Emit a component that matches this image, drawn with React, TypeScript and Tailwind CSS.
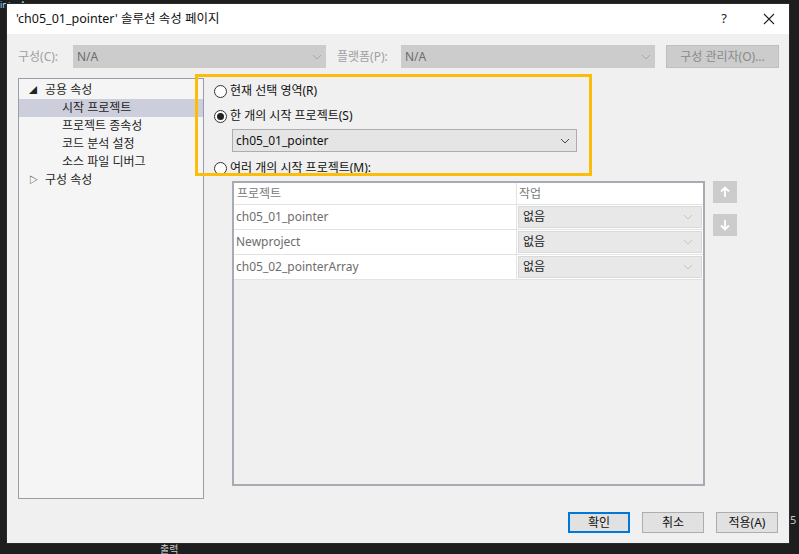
import React from 'react';

const font = { fontFamily: '"Noto Sans", "Noto Sans CJK KR", sans-serif' };

const Chevron = ({ color = '#7a7a7a' }: { color?: string }) => (
  <svg width="10" height="6" viewBox="0 0 10 6">
    <path d="M1 1 L5 5 L9 1" fill="none" stroke={color} strokeWidth="1" />
  </svg>
);

const Radio = ({ checked }: { checked?: boolean }) => (
  <span className="flex h-[13px] w-[13px] items-center justify-center rounded-full border border-[#333] bg-white">
    {checked && <span className="h-[7px] w-[7px] rounded-full bg-[#222]" />}
  </span>
);

const TreeItem = ({ label, selected }: { label: string; selected?: boolean }) => (
  <div className={`flex h-[18px] items-center ${selected ? 'bg-[#cccedb]' : ''}`}>
    <span className="ml-[43px] text-[12px] text-[#1e1e1e]">{label}</span>
  </div>
);

const rows = ['ch05_01_pointer', 'Newproject', 'ch05_02_pointerArray'];

export default function App() {
  return (
    <div className="relative h-[554px] w-[799px] overflow-hidden bg-[#1e1e1e]" style={font}>
      {/* editor behind the dialog */}
      <div className="absolute left-[0px] top-[0px] text-[9px] leading-none text-[#9cdcfe]">interArray</div>
      <div className="absolute left-[160px] top-[544px] text-[10px] leading-none text-[#c8c8c8]">출력</div>
      <div className="absolute left-[790px] top-[514px] text-[11px] leading-none text-[#c8c8c8]">5</div>

      <div className="absolute left-[6px] top-[3px] flex h-[541px] w-[784px] flex-col border border-[#2a2a2a] bg-[#f0f0f0]">
        {/* title bar */}
        <div className="flex h-[30px] items-center bg-white pl-[9px] pr-[14px]">
          <span className="text-[12.5px] text-[#111]">'ch05_01_pointer' 솔루션 속성 페이지</span>
          <span className="ml-auto mr-[36px] text-[13px] text-[#222]">?</span>
          <svg width="12" height="12" viewBox="0 0 12 12">
            <path d="M1 1 L11 11 M11 1 L1 11" stroke="#222" strokeWidth="1.1" />
          </svg>
        </div>

        {/* config row */}
        <div className="mt-[11px] flex h-[23px] items-center pl-[11px]">
          <span className="w-[55px] text-[12px] text-[#a0a0a0]">구성(C):</span>
          <div className="flex h-[23px] w-[253px] items-center justify-between bg-[#cccccc] px-[4px]">
            <span className="text-[12px] text-[#6d6d6d]">N/A</span>
            <Chevron color="#a9a9a9" />
          </div>
          <span className="ml-[11px] w-[64px] text-[12px] text-[#a0a0a0]">플랫폼(P):</span>
          <div className="flex h-[23px] w-[254px] items-center justify-between bg-[#cccccc] px-[4px]">
            <span className="text-[12px] text-[#6d6d6d]">N/A</span>
            <Chevron color="#a9a9a9" />
          </div>
          <div className="ml-[11px] flex h-[23px] w-[113px] items-center justify-center border border-[#bfbfbf] bg-[#cccccc] text-[12px] text-[#8a8a8a]">
            구성 관리자(O)...
          </div>
        </div>

        {/* main area */}
        <div className="mt-[10px] flex pl-[11px]">
          <div className="h-[421px] w-[186px] border border-[#9a9ea8] bg-[#f5f5f5] pt-[2px]">
            <div className="flex h-[18px] items-center">
              <span className="ml-[10px] w-[16px] text-[8px] text-[#222]">◢</span>
              <span className="text-[12px] text-[#1e1e1e]">공용 속성</span>
            </div>
            <TreeItem label="시작 프로젝트" selected />
            <TreeItem label="프로젝트 종속성" />
            <TreeItem label="코드 분석 설정" />
            <TreeItem label="소스 파일 디버그" />
            <div className="flex h-[18px] items-center">
              <span className="ml-[10px] w-[16px] text-[9px] text-[#222]">▷</span>
              <span className="text-[12px] text-[#1e1e1e]">구성 속성</span>
            </div>
          </div>

          <div className="ml-[10px] flex flex-col">
            <div className="mt-[4px] flex h-[18px] items-center gap-[3px]">
              <Radio />
              <span className="text-[12px] text-[#111]">현재 선택 영역(R)</span>
            </div>
            <div className="mt-[7px] flex h-[18px] items-center gap-[3px]">
              <Radio checked />
              <span className="text-[12px] text-[#111]">한 개의 시작 프로젝트(S)</span>
            </div>
            <div className="ml-[18px] mt-[4px] flex h-[23px] w-[345px] items-center justify-between border border-[#adadad] bg-[#e5e5e5] pl-[3px] pr-[6px]">
              <span className="text-[12px] text-[#111]">ch05_01_pointer</span>
              <Chevron color="#444" />
            </div>
            <div className="mt-[7px] flex h-[18px] items-center gap-[3px]">
              <Radio />
              <span className="text-[12px] text-[#111]">여러 개의 시작 프로젝트(M):</span>
            </div>

            <div className="ml-[18px] mt-[4px] flex gap-[8px]">
              <div className="h-[305px] w-[473px] border-2 border-[#a7abb3] bg-[#f0f0f0]">
                <div className="flex h-[22px] border-b border-[#e3e3e3] bg-white text-[12px] text-[#7a7a7a]">
                  <div className="flex w-[283px] items-center border-r border-[#e3e3e3] pl-[3px]">프로젝트</div>
                  <div className="flex items-center pl-[2px]">작업</div>
                </div>
                {rows.map((r) => (
                  <div key={r} className="flex h-[25px] border-b border-[#e3e3e3] bg-white">
                    <div className="flex w-[283px] items-center border-r border-[#e3e3e3] pl-[2px] text-[12px] text-[#6d6d6d]">{r}</div>
                    <div className="flex flex-1 items-center px-[1px]">
                      <div className="flex h-[22px] w-[184px] items-center justify-between border border-[#d9d9d9] bg-[#e8e8e8] pl-[4px] pr-[8px]">
                        <span className="text-[12px] text-[#222]">없음</span>
                        <Chevron color="#c5c5c5" />
                      </div>
                    </div>
                  </div>
                ))}
              </div>
              <div className="flex flex-col gap-[11px]">
                <div className="flex h-[22px] w-[24px] items-center justify-center bg-[#cccccc]">
                  <svg width="10" height="12" viewBox="0 0 10 12">
                    <path d="M5 11 V2 M1 5.5 L5 1.5 L9 5.5" fill="none" stroke="#fff" strokeWidth="1.8" />
                  </svg>
                </div>
                <div className="flex h-[22px] w-[24px] items-center justify-center bg-[#cccccc]">
                  <svg width="10" height="12" viewBox="0 0 10 12">
                    <path d="M5 1 V10 M1 6.5 L5 10.5 L9 6.5" fill="none" stroke="#fff" strokeWidth="1.8" />
                  </svg>
                </div>
              </div>
            </div>
          </div>
        </div>

        {/* bottom buttons */}
        <div className="mt-[13px] flex justify-end gap-[12px] pr-[11px]">
          <div className="flex h-[21px] w-[62px] items-center justify-center border-2 border-[#0078d7] bg-[#e1e1e1] text-[12px] text-[#111]">확인</div>
          <div className="flex h-[21px] w-[62px] items-center justify-center border border-[#adadad] bg-[#e1e1e1] text-[12px] text-[#111]">취소</div>
          <div className="flex h-[21px] w-[62px] items-center justify-center border border-[#adadad] bg-[#e1e1e1] text-[12px] text-[#111]">적용(A)</div>
        </div>

        {/* yellow annotation */}
        <div className="absolute left-[188px] top-[70px] h-[102px] w-[397px] border-[3px] border-[#fbbd08]" />
      </div>
    </div>
  );
}
